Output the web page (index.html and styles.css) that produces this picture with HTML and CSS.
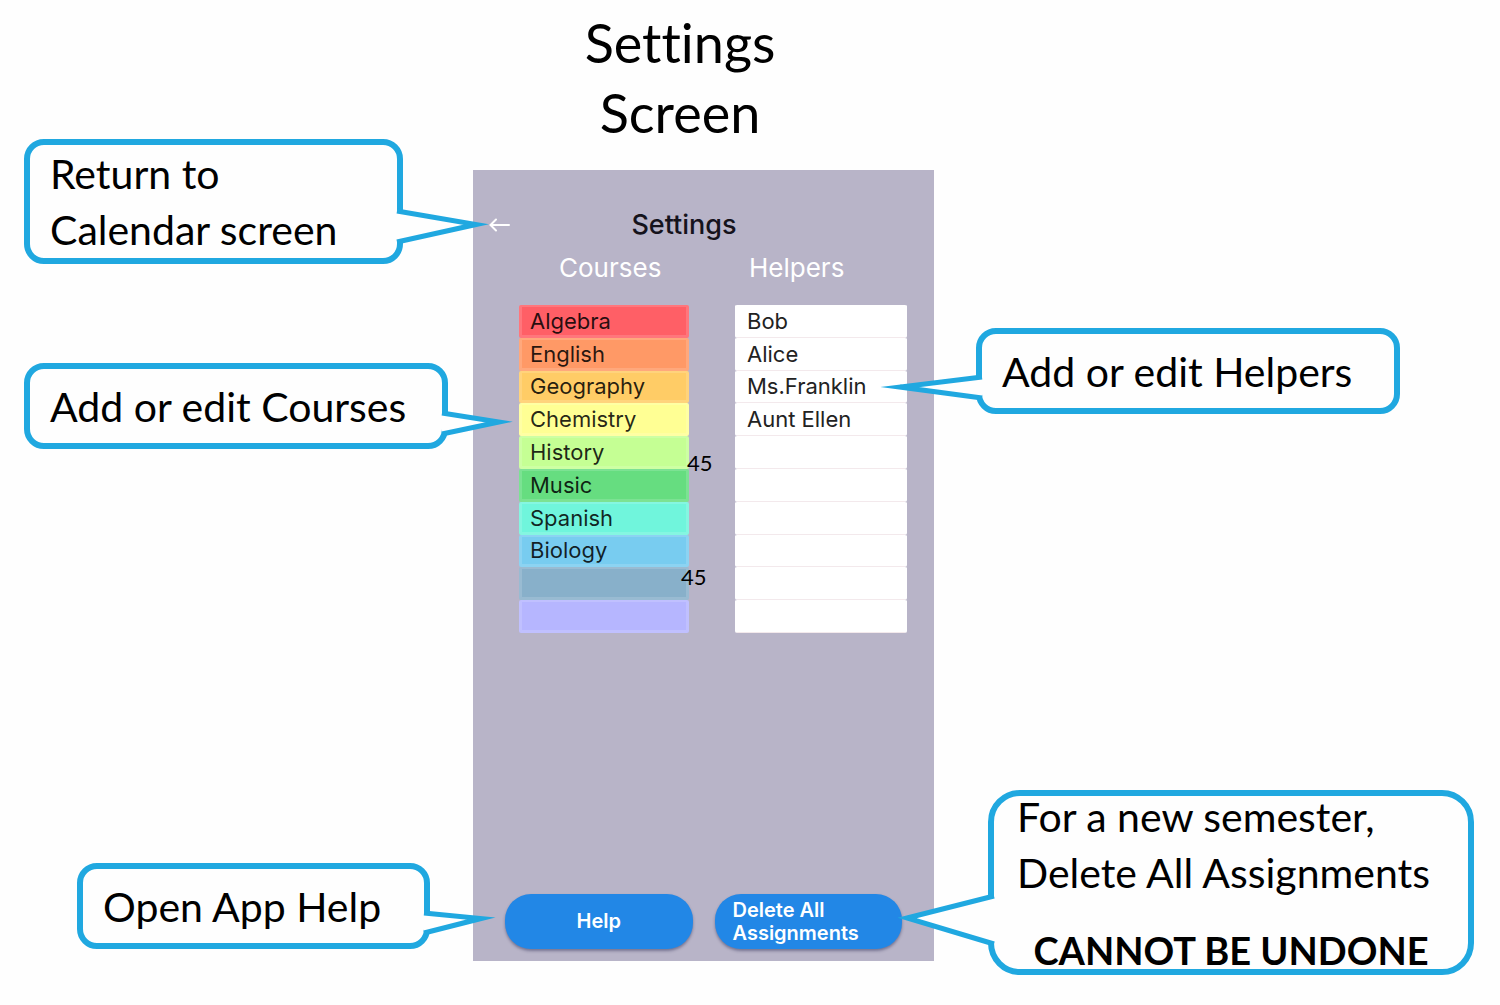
FILE: index.html
```html
<!DOCTYPE html>
<html lang="en">
<head>
<meta charset="utf-8">
<meta name="viewport" content="width=device-width, initial-scale=1">
<title>Settings Screen</title>
<link rel="stylesheet" href="styles.css">
</head>
<body>
<main class="guide">
  <h1 class="guide-title">Settings<br>Screen</h1>

  <div class="notes notes-left">
    <p class="note note-return">Return to<br>Calendar screen
      <svg class="tail tail-right" width="92" height="113" aria-hidden="true"><path d="M0 66L79 79.500L0 97"/></svg>
    </p>
    <p class="note note-courses">Add or edit Courses
      <svg class="tail tail-right" width="70" height="75" aria-hidden="true"><path d="M0 44L57 53L0 65"/></svg>
    </p>
    <p class="note note-help">Open App Help
      <svg class="tail tail-right" width="72" height="75" aria-hidden="true"><path d="M0 44L57 49.500L0 64"/></svg>
    </p>
  </div>

  <section class="phone" aria-labelledby="screen-title">
    <header class="phone-bar">
      <button class="back" type="button" aria-label="Back">
        <svg width="22" height="16" viewBox="0 0 22 16" aria-hidden="true"><path d="M20 8H2M7 2.500L1.500 8L7 13.500"/></svg>
      </button>
      <h2 class="phone-title" id="screen-title">Settings</h2>
    </header>

    <form class="lists">
      <div class="list courses">
        <h3 class="list-title" id="courses">Courses</h3>
        <div class="fields">
          <input class="field red" aria-labelledby="courses" value="Algebra">
          <input class="field orange" aria-labelledby="courses" value="English">
          <input class="field amber" aria-labelledby="courses" value="Geography">
          <input class="field yellow" aria-labelledby="courses" value="Chemistry">
          <input class="field lime" aria-labelledby="courses" value="History">
          <input class="field green" aria-labelledby="courses" value="Music">
          <input class="field aqua" aria-labelledby="courses" value="Spanish">
          <input class="field sky" aria-labelledby="courses" value="Biology">
          <input class="field steel" aria-labelledby="courses" value="">
          <input class="field violet" aria-labelledby="courses" value="">
          <span class="count count-upper">45</span>
          <span class="count count-lower">45</span>
        </div>
      </div>
      <div class="list helpers">
        <h3 class="list-title" id="helpers">Helpers</h3>
        <div class="fields">
          <input class="field" aria-labelledby="helpers" value="Bob">
          <input class="field" aria-labelledby="helpers" value="Alice">
          <input class="field" aria-labelledby="helpers" value="Ms.Franklin">
          <input class="field" aria-labelledby="helpers" value="Aunt Ellen">
          <input class="field" aria-labelledby="helpers" value="">
          <input class="field" aria-labelledby="helpers" value="">
          <input class="field" aria-labelledby="helpers" value="">
          <input class="field" aria-labelledby="helpers" value="">
          <input class="field" aria-labelledby="helpers" value="">
          <input class="field" aria-labelledby="helpers" value="">
        </div>
      </div>
    </form>

    <footer class="actions">
      <button class="action" type="button">Help</button>
      <button class="action action-delete" type="button">Delete All<br>Assignments</button>
    </footer>
  </section>

  <div class="notes notes-right">
    <p class="note note-helpers">Add or edit Helpers
      <svg class="tail tail-left" width="110" height="74" viewBox="-110 0 110 74" aria-hidden="true"><path d="M0 43L-82 53L0 64"/></svg>
    </p>
    <div class="note note-delete">
      <p class="note-text">For a new semester,<br>Delete All Assignments</p>
      <strong class="warning">CANNOT BE UNDONE</strong>
      <svg class="tail tail-left" width="110" height="170" viewBox="-110 0 110 170" aria-hidden="true"><path d="M0 100L-87 122L0 148"/></svg>
    </div>
  </div>
</main>
</body>
</html>
```
FILE: styles.css
```css
:root {
  --outline: #20a8e0;
  --label: "Lato", "Carlito", "Noto Sans", sans-serif;
  --app: "Inter", "Roboto", sans-serif;
}

* {
  box-sizing: border-box;
}

body {
  margin: 0;
  background: #fefefe;
  color: #000;
  font-family: var(--label);
  font-variant-ligatures: none;
}

h1, h2, h3, p {
  margin: 0;
  font-weight: 400;
}

.guide {
  display: grid;
  grid-template-columns: 473fr minmax(461px, 461fr) 566fr;
  grid-template-rows: max-content 1fr;
  padding-bottom: 30px;
}

.guide-title {
  grid-area: 1 / 1 / 2 / 4;
  padding: 8px 140px 22px 0;
  font-size: 54px;
  line-height: 70px;
  text-align: center;
}

/* Speech-bubble notes on both sides of the phone */
.notes {
  display: flex;
  flex-direction: column;
  align-items: flex-start;
  z-index: 1;
}

.notes-left {
  grid-area: 1 / 1 / 3 / 2;
  align-items: flex-end;
  padding-top: 139px;
}

.notes-right {
  grid-area: 1 / 3 / 3 / 4;
  padding-top: 328px;
}

.note {
  position: relative;
  display: flex;
  flex-direction: column;
  justify-content: center;
  min-height: 86px;
  padding: 2px 20px 0;
  border: 6px solid var(--outline);
  border-radius: 20px;
  background: #fefefe;
  font-size: 41px;
  line-height: 56px;
  white-space: nowrap;
}

.note-return {
  display: block;
  width: 379px;
  min-height: 125px;
  padding-top: 1px;
  margin-right: 70px;
}

.note-courses {
  width: 424px;
  margin: 99px 25px 0 0;
}

.note-help {
  width: 353px;
  margin: 414px 43px 0 0;
}

.note-helpers {
  width: 424px;
  margin-left: 42px;
}

.note-delete {
  width: 486px;
  min-height: 185px;
  margin: 376px 0 0 54px;
  padding: 0 23px;
  border-radius: 32px;
  justify-content: space-between;
}

.note-text {
  margin-top: -7px;
}

.warning {
  align-self: center;
  font-size: 38px;
  line-height: 38px;
}

.tail {
  position: absolute;
  top: 0;
  overflow: visible;
  fill: #fefefe;
  stroke: var(--outline);
  stroke-width: 5;
  stroke-miterlimit: 20;
}

.tail-right {
  left: 100%;
}

.tail-left {
  right: 100%;
}

/* Phone screen */
.phone {
  grid-area: 2 / 2 / 3 / 3;
  align-self: start;
  display: flex;
  flex-direction: column;
  min-height: 791px;
  padding: 36px 27px 12px 32px;
  background: #b8b4c8;
  font-family: var(--app);
}

.phone-bar {
  display: grid;
  grid-template-columns: 22px 1fr 22px;
  align-items: center;
  margin: 0 28px 0 -16px;
}

.back {
  display: flex;
  padding: 0;
  border: 0;
  background: none;
}

.back svg {
  fill: none;
  stroke: #fff;
  stroke-width: 2;
  stroke-linecap: round;
}

.phone-title {
  color: #15131c;
  font-size: 27px;
  font-weight: 500;
  line-height: 38px;
  text-align: center;
}

.lists {
  display: flex;
  justify-content: space-between;
  margin-left: 14px;
}

.list {
  width: 172px;
}

.courses {
  width: 170px;
}

.list-title {
  padding: 4px 0 17px 40px;
  color: #fff;
  font-size: 26px;
  line-height: 40px;
}

.helpers .list-title {
  padding-left: 14px;
}

.fields {
  position: relative;
  display: grid;
  grid-template-rows: repeat(10, 1fr);
  height: 328px;
}

.field {
  width: 100%;
  min-height: 0;
  padding: 0 8px;
  border: 3px solid #fff;
  border-top-width: 2px;
  border-radius: 2px;
  background: #fff;
  color: #222;
  font: 22px/26px var(--app);
}

.helpers .field {
  padding: 0 9px 2px;
  border-bottom: 1px solid #f3e9ec;
}

.courses .field {
  border-color: rgb(255 255 255 / 15%);
  color: rgb(0 0 0 / 85%);
}

.courses .red { background-color: #ff5f66; }
.courses .orange { background-color: #ff9966; }
.courses .amber { background-color: #ffcc66; }
.courses .yellow { background-color: #ffff94; }
.courses .lime { background-color: #c5ff94; }
.courses .green { background-color: #66dd80; }
.courses .aqua { background-color: #70f5dc; }
.courses .sky { background-color: #78ccf0; }
.courses .steel { background-color: #88b0ca; }
.courses .violet { background-color: #b6b6ff; }

.count {
  position: absolute;
  color: #000;
  font: 22px/26px var(--label);
}

.count-upper {
  top: 145px;
  left: 168px;
}

.count-lower {
  top: 259px;
  left: 162px;
}

.actions {
  display: grid;
  grid-template-columns: 1fr 1fr;
  gap: 22px;
  margin: auto 5px 0 0;
}

.action {
  min-height: 55px;
  padding: 0 18px;
  border: 0;
  border-radius: 26px;
  background: #2287e6;
  box-shadow: 0 2px 3px rgb(40 40 80 / 45%);
  color: #fff;
  font: 600 20px/23px var(--app);
}

.action-delete {
  text-align: left;
}
```
